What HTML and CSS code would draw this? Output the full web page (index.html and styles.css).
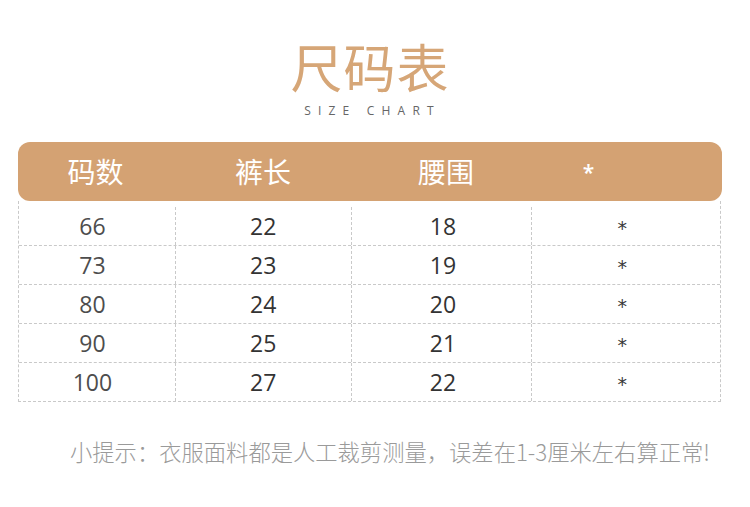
FILE: index.html
```html
<!DOCTYPE html>
<html lang="zh">
<head>
<meta charset="utf-8">
<link rel="stylesheet" href="styles.css">
</head>
<body>
<div class="page">
  <div class="title">尺码表</div>
  <div class="subtitle">SIZE CHART</div>
  <div class="table">
    <div class="head">
      <div class="c c1">码数</div>
      <div class="c c2">裤长</div>
      <div class="c c3">腰围</div>
      <div class="c c4 star">*</div>
    </div>
    <div class="body">
      <div class="row first">
        <div class="c c1 v1">66</div><div class="c c2">22</div><div class="c c3">18</div><div class="c c4"><span class="ast">*</span></div>
      </div>
      <div class="row">
        <div class="c c1 v1">73</div><div class="c c2">23</div><div class="c c3">19</div><div class="c c4"><span class="ast">*</span></div>
      </div>
      <div class="row">
        <div class="c c1 v1">80</div><div class="c c2">24</div><div class="c c3">20</div><div class="c c4"><span class="ast">*</span></div>
      </div>
      <div class="row">
        <div class="c c1 v1">90</div><div class="c c2">25</div><div class="c c3">21</div><div class="c c4"><span class="ast">*</span></div>
      </div>
      <div class="row">
        <div class="c c1 v1">100</div><div class="c c2">27</div><div class="c c3">22</div><div class="c c4"><span class="ast">*</span></div>
      </div>
    </div>
  </div>
  <div class="tip">小提示：衣服面料都是人工裁剪测量，误差在1-3厘米左右算正常!</div>
</div>
</body>
</html>
```
FILE: styles.css
```css
html, body {
  margin: 0;
  padding: 0;
  background: #ffffff;
}
.page {
  width: 704px;
  margin-left: 18px;
  font-family: "Noto Sans CJK SC", "Open Sans", sans-serif;
}
.title {
  margin-top: 38px;
  height: 56px;
  line-height: 56px;
  text-align: center;
  font-size: 52px;
  color: #d6a677;
  letter-spacing: 1px;
}
.subtitle {
  margin-top: 9px;
  text-align: center;
  font-family: "Open Sans", sans-serif;
  font-size: 12px;
  line-height: 16px;
  letter-spacing: 7.2px;
  padding-left: 5px;
  color: #666666;
}
.table {
  margin-top: 23px;
  width: 704px;
}
.head {
  display: flex;
  height: 59px;
  background: #d4a273;
  border-radius: 12px;
  color: #ffffff;
  font-size: 28px;
  align-items: center;
}
.head .c {
  text-align: center;
  line-height: 59px;
}
.head .c1 { width: 155px; }
.head .c2 { width: 180px; }
.head .c3 { width: 186px; }
.head .c4 { width: 183px; padding-right: 84px; box-sizing: border-box; }
.head .star {
  font-family: "Open Sans", sans-serif;
  font-weight: 600;
  font-size: 21px;
  align-self: flex-start;
  padding-top: 17px;
  line-height: 26px;
}
.body {
  border-left: 1px dashed #c9c9c9;
  border-right: 1px dashed #c9c9c9;
  border-bottom: 1px dashed #c9c9c9;
  margin-right: 1px;
}
.row {
  display: flex;
  height: 39px;
  border-top: 1px dashed #c9c9c9;
  font-family: "Open Sans", sans-serif;
  font-size: 23px;
  color: #333333;
  box-sizing: border-box;
}
.row.first {
  border-top: none;
  height: 44px;
  padding-top: 6px;
}
.row .c {
  display: flex;
  align-items: center;
  justify-content: center;
}
.row .c + .c {
  border-left: 1px dashed #c9c9c9;
}
.row .c1 { width: 156px; padding-right: 9px; box-sizing: border-box; }
.row .c2 { width: 175px; }
.row .c3 { width: 181px; padding-left: 3px; box-sizing: border-box; }
.row .c4 { width: 189px; padding-right: 8px; box-sizing: border-box; }
.v1 { color: #4d4d4d; }
.ast {
  font-family: "DejaVu Sans", sans-serif;
  font-size: 19px;
  color: #3a3a3a;
  position: relative;
  top: 2px;
}
.tip {
  margin-top: 34px;
  margin-left: 52px;
  font-size: 22.3px;
  line-height: 30px;
  color: #9a9a9a;
  font-weight: 300;
  white-space: nowrap;
}
```
